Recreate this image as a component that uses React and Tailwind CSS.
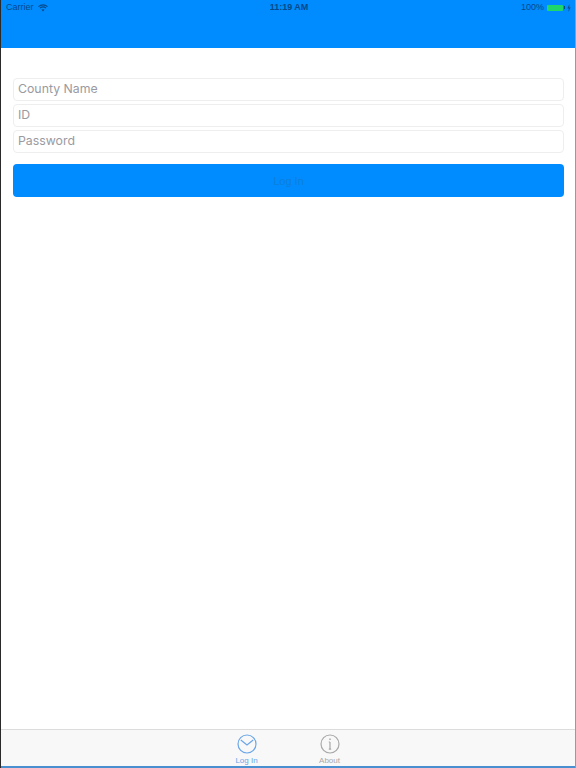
function StatusBar() {
  return (
    <div className="grid grid-cols-3 items-center h-[15px] pl-[5px] pr-[4px] text-[9px] text-[#06498a]">
      <div className="flex items-center gap-[4px]">
        <span>Carrier</span>
        <svg width="10" height="8" viewBox="0 0 10 8" fill="none" stroke="#06498a" strokeWidth="1.1">
          <path d="M.5 2.6C3 .3 7 .3 9.5 2.6" />
          <path d="M2 4.2c1.7-1.5 4.3-1.5 6 0" />
          <path d="M5 7.6 3.4 5.8c.9-.8 2.3-.8 3.2 0Z" fill="#06498a" stroke="none" />
        </svg>
      </div>
      <div className="text-center font-bold pl-[1px]">11:19 AM</div>
      <div className="flex items-center justify-end">
        <span className="mr-[3px]">100%</span>
        <div className="w-[16px] h-[6px] bg-[#1fd66b] rounded-[1px]" />
        <div className="w-[1px] h-[3px] bg-[#06498a] ml-[1px]" />
        <svg width="4" height="8" viewBox="0 0 4 8" className="ml-[2px]">
          <path d="M2.4 0 0.4 4.4H1.8L1.4 8 3.6 3.4H2.2Z" fill="#06498a" />
        </svg>
      </div>
    </div>
  );
}

function Field({ placeholder }) {
  return (
    <input
      type="text"
      placeholder={placeholder}
      className="w-full h-[23px] pl-[4px] pr-[5px] pb-[2px] bg-white border border-[#eeeeee] rounded-[4px] font-['Inter'] text-[12.3px] text-gray-700 placeholder:text-[#9a9a9f] outline-none"
    />
  );
}

function TabItem({ label, active, children }) {
  return (
    <div className={`w-[83px] flex flex-col items-center pt-[4px] ${active ? 'text-[#6ba6e8]' : 'text-[#a8a8a8]'}`}>
      {children}
      <span className="text-[8px] leading-[10px] mt-[2px]">{label}</span>
    </div>
  );
}

export default function App() {
  return (
    <div
      className="w-[576px] h-[768px] flex flex-col bg-white border-l border-l-[#2a2a2a] border-r border-r-[#9a9a9a] overflow-hidden"
      style={{ fontFamily: '"Liberation Sans", sans-serif' }}
    >
      <header className="h-[48px] shrink-0 bg-[#008cff]">
        <StatusBar />
      </header>

      <main className="flex-1 pl-[12px] pr-[11px] pt-[30px]">
        <div className="flex flex-col gap-[3px]">
          <Field placeholder="County Name" />
          <Field placeholder="ID" />
          <Field placeholder="Password" />
        </div>
        <button className="w-full h-[33px] mt-[11px] pt-[2px] bg-[#008cff] rounded-[4px] text-[11px] text-[#0c7fdc]">
          Log In
        </button>
      </main>

      <nav className="h-[37px] shrink-0 flex justify-center bg-[#f8f8f8] border-t border-[#dcdcdc]">
        <TabItem label="Log In" active>
          <svg width="20" height="20" viewBox="0 0 20 20" fill="none" stroke="#6ba6e8" strokeWidth="1.2">
            <circle cx="10" cy="10" r="9" />
            <path d="M3.8 6 10 11l6.2-5" />
          </svg>
        </TabItem>
        <TabItem label="About">
          <svg width="20" height="20" viewBox="0 0 20 20" fill="none" stroke="#a8a8a8" strokeWidth="1.2">
            <circle cx="10" cy="10" r="9" />
            <path d="M10 4.5v1.6" strokeWidth="1.5" />
            <path d="M10 8v7.2M8.8 8H10M8.8 15.2h2.4" />
          </svg>
        </TabItem>
      </nav>
      <div className="h-[2px] shrink-0 bg-[#4a90d0]" />
    </div>
  );
}
